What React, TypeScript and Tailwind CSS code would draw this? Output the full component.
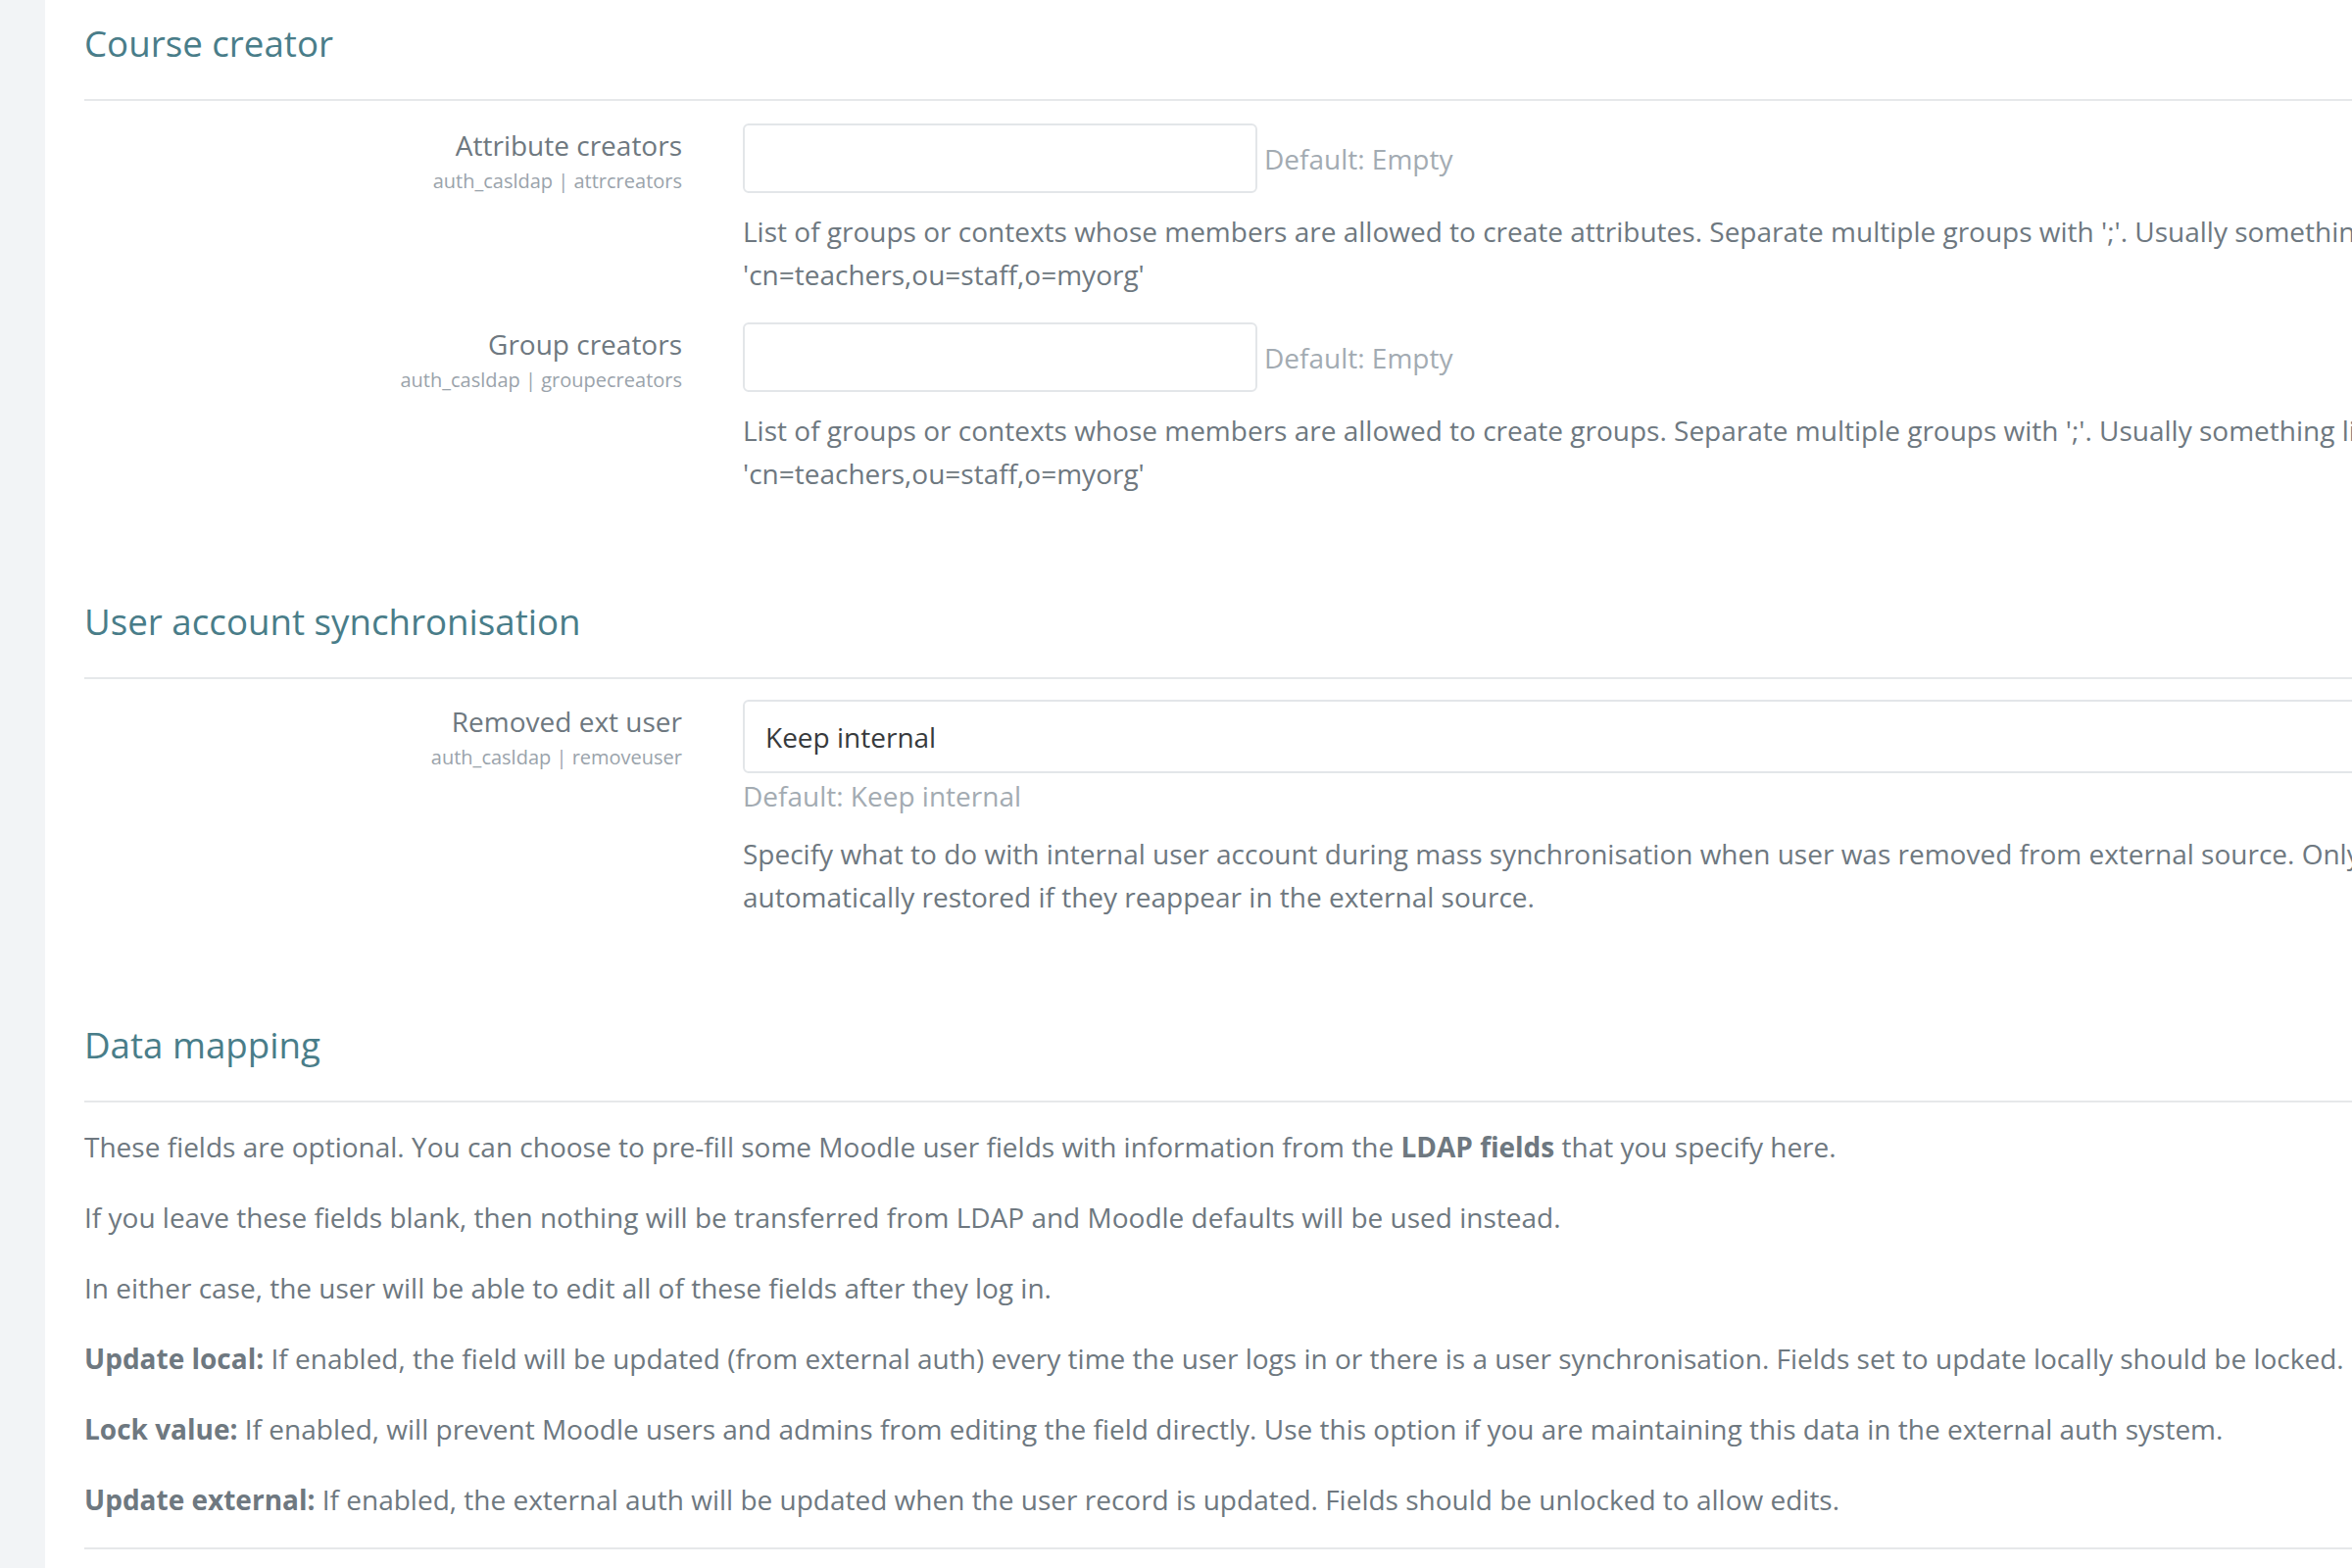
import React from "react";

const Section = ({ title, first, children }: { title: string; first?: boolean; children: React.ReactNode }) => (
  <section className={first ? "pt-[20px]" : "pt-[105px]"}>
    <h3 className="text-[36.7px] leading-[48px] text-[#497d89]">{title}</h3>
    <div className="mt-[33px] h-[2px] w-full bg-[#e6e8ea]" />
    {children}
  </section>
);

interface SettingProps {
  label: string;
  name: string;
  children: React.ReactNode;
  className?: string;
}

const Setting = ({ label, name, children, className }: SettingProps) => (
  <div className={"flex " + (className ?? "")}>
    <div className="w-[610px] shrink-0 text-right">
      <div className="text-[28px] leading-[44px] text-[#6e7880]">{label}</div>
      <div className="text-[20px] leading-[30px] text-[#9aa3ab]">auth_casldap | {name}</div>
    </div>
    <div className="ml-[62px] flex-1">{children}</div>
  </div>
);

const TextSetting = ({ lines }: { lines: string[] }) => (
  <>
    <div className="flex items-center">
      <input
        type="text"
        className="h-[71px] w-[525px] rounded-[6px] border-2 border-[#e3e6e9] bg-white px-[22px] text-[28px] outline-none"
      />
      <span className="ml-[7px] text-[28px] text-[#a3abb2]">Default: Empty</span>
    </div>
    <div className="mt-[17px] text-[28px] leading-[44px] text-[#6e7880]">
      {lines.map((l) => (
        <div key={l} className="whitespace-nowrap">{l}</div>
      ))}
    </div>
  </>
);

export default function App() {
  return (
    <div
      className="flex h-[1600px] w-[2400px] overflow-hidden bg-white"
      style={{ fontFamily: "'Open Sans', 'Noto Sans', sans-serif" }}
    >
      <div className="w-[46px] shrink-0 bg-[#f2f4f6]" />
      <main className="w-[2900px] shrink-0 pl-[40px]">
        <Section title="Course creator" first>
          <Setting label="Attribute creators" name="attrcreators" className="mt-[23px]">
            <TextSetting
              lines={[
                "List of groups or contexts whose members are allowed to create attributes. Separate multiple groups with ';'. Usually something like",
                "'cn=teachers,ou=staff,o=myorg'",
              ]}
            />
          </Setting>
          <Setting label="Group creators" name="groupecreators" className="mt-[27px]">
            <TextSetting
              lines={[
                "List of groups or contexts whose members are allowed to create groups. Separate multiple groups with ';'. Usually something like",
                "'cn=teachers,ou=staff,o=myorg'",
              ]}
            />
          </Setting>
        </Section>

        <Section title="User account synchronisation">
          <Setting label="Removed ext user" name="removeuser" className="mt-[21px]">
            <div className="flex h-[75px] w-full items-center rounded-[6px] border-2 border-[#e3e6e9] px-[21px] text-[28px] text-[#373a3c]">
              Keep internal
            </div>
            <div className="mt-px text-[28px] leading-[44px] text-[#a3abb2]">Default: Keep internal</div>
            <div className="mt-[15px] text-[28px] leading-[44px] text-[#6e7880]">
              <div className="whitespace-nowrap">
                Specify what to do with internal user account during mass synchronisation when user was removed from external source. Only suspended users are
              </div>
              <div className="whitespace-nowrap">automatically restored if they reappear in the external source.</div>
            </div>
          </Setting>
        </Section>

        <Section title="Data mapping">
          <div className="mt-[23px] text-[28px] leading-[44px] text-[#6e7880]">
            <p className="mb-[28px] whitespace-nowrap">
              These fields are optional. You can choose to pre-fill some Moodle user fields with information from the{" "}
              <b className="font-bold">LDAP fields</b> that you specify here.
            </p>
            <p className="mb-[28px] whitespace-nowrap">
              If you leave these fields blank, then nothing will be transferred from LDAP and Moodle defaults will be used instead.
            </p>
            <p className="mb-[28px] whitespace-nowrap">
              In either case, the user will be able to edit all of these fields after they log in.
            </p>
            <p className="mb-[28px] whitespace-nowrap">
              <b className="font-bold">Update local:</b> If enabled, the field will be updated (from external auth) every time the user logs in or there is a user synchronisation. Fields set to update locally should be locked.
            </p>
            <p className="mb-[28px] whitespace-nowrap">
              <b className="font-bold">Lock value:</b> If enabled, will prevent Moodle users and admins from editing the field directly. Use this option if you are maintaining this data in the external auth system.
            </p>
            <p className="mb-[27px] whitespace-nowrap">
              <b className="font-bold">Update external:</b> If enabled, the external auth will be updated when the user record is updated. Fields should be unlocked to allow edits.
            </p>
          </div>
          <div className="h-[2px] w-full bg-[#e6e8ea]" />
        </Section>
      </main>
    </div>
  );
}
